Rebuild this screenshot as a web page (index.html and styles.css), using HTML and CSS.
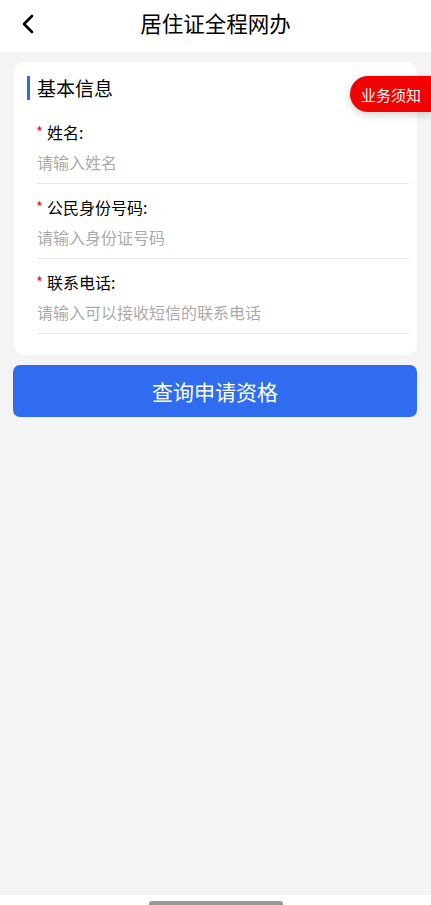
FILE: index.html
```html
<!DOCTYPE html>
<html lang="zh-CN">
<head>
<meta charset="utf-8">
<title>居住证全程网办</title>
<link rel="stylesheet" href="styles.css">
<meta name="viewport" content="width=device-width, initial-scale=1.0">
</head>
<body>
<header class="topbar">
    <a class="back" href="#">
        <svg width="14" height="20" viewBox="0 0 14 20"><path d="M11 2 L3 10 L11 18" fill="none" stroke="#000" stroke-width="2.6" stroke-linecap="round" stroke-linejoin="round"/></svg>
    </a>
    <h1>居住证全程网办</h1>
</header>
<main class="content">
    <section class="card">
        <div class="card-title">基本信息</div>
        <a class="notice" href="#">业务须知</a>
        <div class="field">
            <label><span class="req">*</span>姓名:</label>
            <input type="text" placeholder="请输入姓名">
        </div>
        <div class="field">
            <label><span class="req">*</span>公民身份号码:</label>
            <input type="text" placeholder="请输入身份证号码">
        </div>
        <div class="field">
            <label><span class="req">*</span>联系电话:</label>
            <input type="text" placeholder="请输入可以接收短信的联系电话">
        </div>
    </section>
    <button class="submit">查询申请资格</button>
</main>
<footer class="homebar">
    <span></span>
</footer>
</body>
</html>
```

FILE: styles.css
```css
* {
    margin: 0;
    padding: 0;
    box-sizing: border-box;
    font-family: "Noto Sans CJK SC", "Noto Sans", sans-serif;
}

body {
    display: flex;
    flex-direction: column;
    min-height: 100vh;
    background: #fff;
    color: #000;
}

.topbar {
    height: 52px;
    display: flex;
    align-items: center;
    justify-content: center;
    position: relative;
    background: #fff;
}

.topbar .back {
    position: absolute;
    left: 21px;
    top: 14px;
    display: flex;
}

.topbar h1 {
    font-size: 21.5px;
    font-weight: 400;
    line-height: 1;
    margin-top: -6px;
}

.content {
    flex: 1;
    background: #f4f4f4;
    padding: 10px 14px 0 13px;
}

.card {
    position: relative;
    margin-left: 1px;
    background: #fff;
    border-radius: 10px;
    padding: 14px 8px 0 23px;
    height: 293px;
}

.card-title {
    font-size: 19px;
    line-height: 24px;
    height: 24px;
    padding-left: 7px;
    margin-left: -10px;
    border-left: 3px solid #2f6ae8;
    display: flex;
    align-items: center;
}

.notice {
    position: absolute;
    right: -14px;
    top: 14px;
    height: 36px;
    width: 81px;
    padding-left: 11px;
    display: flex;
    align-items: center;
    font-size: 15px;
    color: #fff;
    text-decoration: none;
    background: #f50000;
    border-radius: 18px 0 0 18px;
    box-shadow: 0 3px 8px rgba(0,0,0,0.18);
}

.field {
    display: flex;
    flex-direction: column;
    border-bottom: 1px solid #e6e6e6;
}

.field label {
    font-size: 16px;
    line-height: 22px;
    margin-top: 12px;
    display: flex;
    align-items: center;
}

.field .req {
    color: #e02020;
    font-size: 15px;
    width: 11px;
    margin-left: -1px;
}

.field input {
    border: none;
    outline: none;
    font-size: 16px;
    height: 40px;
    padding: 0 0 2px;
    color: #333;
    background: none;
}

.field input::placeholder {
    color: #aaa;
}

.card-title + .notice + .field label {
    margin-top: 21px;
}

.submit {
    display: block;
    width: 404px;
    height: 52px;
    margin-top: 10px;
    border: none;
    border-radius: 7px;
    background: #306cef;
    color: #fff;
    font-size: 21px;
    cursor: pointer;
}

.homebar {
    height: 10px;
    display: flex;
    justify-content: center;
    align-items: flex-end;
    background: #fff;
}

.homebar span {
    width: 134px;
    height: 4px;
    background: #999;
    border-radius: 3px 3px 0 0;
}
```
